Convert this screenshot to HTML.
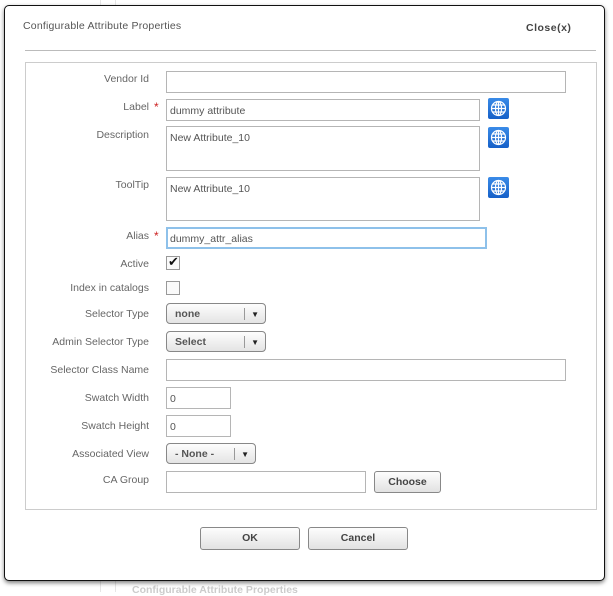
<!DOCTYPE html>
<html><head><style>
body{margin:0;width:613px;height:592px;background:#fff;position:relative;overflow:hidden;font-family:"Liberation Sans",sans-serif;font-size:10.5px;color:#555}
.a{position:absolute}
.dlg{left:4px;top:5px;width:599px;height:574px;border:1px solid #111;border-radius:5px;background:#fff;box-shadow:0 2px 4px rgba(0,0,0,.5)}
.lab{position:absolute;right:464px;text-align:right;white-space:nowrap;color:#666}
.in{position:absolute;border:1px solid #b5b5b5;background:#fff;box-sizing:border-box;padding:5px 3px 2px;white-space:nowrap;color:#555}
.star{position:absolute;color:#c22;font-size:12px;left:154px}
.glb{position:absolute;left:488px;width:21px;height:21px;background:linear-gradient(#3a8be8,#1560c8);border-radius:2px}
.sel{position:absolute;border:1px solid #888;border-radius:4px;background:linear-gradient(#fdfdfd,#e4e4e4);box-sizing:border-box;font-weight:bold;color:#555;padding:4px 8px;font-size:10.5px}
.sel .sep{position:absolute;right:20px;top:4px;height:12px;border-left:1px solid #999}
.sel .ar{position:absolute;right:6px;top:6px;font-size:8px;color:#222}
.btn{position:absolute;border:1px solid #888;border-radius:3px;background:linear-gradient(#fdfdfd,#e2e2e2);box-sizing:border-box;font-weight:bold;text-align:center;color:#444;line-height:21px}
.cb{position:absolute;left:166px;width:14px;height:14px;border:1px solid #999;box-sizing:border-box;background:#fafafa}
</style></head><body>
<div class="a" style="left:100px;top:0;width:1px;height:592px;background:#e6e6e6"></div>
<div class="a" style="left:115px;top:0;width:1px;height:592px;background:#e6e6e6"></div>
<div class="a" style="left:132px;top:584px;color:#ccc;font-weight:bold">Configurable Attribute Properties</div>
<div class="a dlg"></div>
<div class="a" style="left:23px;top:20px;letter-spacing:0.2px">Configurable Attribute Properties</div>
<div class="a" style="left:526px;top:22px;font-weight:bold;color:#444;letter-spacing:0.5px">Close(x)</div>
<div class="a" style="left:25px;top:50px;width:571px;height:1px;background:#bbb"></div>
<div class="a" style="left:25px;top:62px;width:570px;height:446px;border:1px solid #ccc"></div>

<div class="lab" style="top:73px">Vendor Id</div>
<div class="in" style="left:166px;top:71px;width:400px;height:22px"></div>
<div class="lab" style="top:101px;right:464px">Label</div><span class="star" style="top:100px">*</span>
<div class="in" style="left:166px;top:99px;width:314px;height:22px">dummy attribute</div>
<div class="lab" style="top:129px">Description</div>
<div class="in" style="left:166px;top:126px;width:314px;height:45px">New Attribute_10</div>
<div class="lab" style="top:179px">ToolTip</div>
<div class="in" style="left:166px;top:177px;width:314px;height:44px">New Attribute_10</div>
<div class="lab" style="top:230px">Alias</div><span class="star" style="top:229px">*</span>
<div class="in" style="left:166px;top:227px;width:321px;height:22px;border:2px solid #8ec1ea;padding:4px 2px 1px">dummy_attr_alias</div>
<div class="lab" style="top:258px">Active</div>
<div class="cb" style="top:256px"><span class="a" style="left:1px;top:-3px;font-size:13px;color:#111">✔</span></div>
<div class="lab" style="top:282px">Index in catalogs</div>
<div class="cb" style="top:281px"></div>
<div class="lab" style="top:308px">Selector Type</div>
<div class="sel" style="left:166px;top:303px;width:100px;height:21px">none<span class="sep"></span><span class="ar">▼</span></div>
<div class="lab" style="top:336px">Admin Selector Type</div>
<div class="sel" style="left:166px;top:331px;width:100px;height:21px">Select<span class="sep"></span><span class="ar">▼</span></div>
<div class="lab" style="top:364px">Selector Class Name</div>
<div class="in" style="left:166px;top:359px;width:400px;height:22px"></div>
<div class="lab" style="top:392px">Swatch Width</div>
<div class="in" style="left:166px;top:387px;width:65px;height:22px">0</div>
<div class="lab" style="top:420px">Swatch Height</div>
<div class="in" style="left:166px;top:415px;width:65px;height:22px">0</div>
<div class="lab" style="top:448px">Associated View</div>
<div class="sel" style="left:166px;top:443px;width:90px;height:21px">- None -<span class="sep"></span><span class="ar">▼</span></div>
<div class="lab" style="top:474px">CA Group</div>
<div class="in" style="left:166px;top:471px;width:200px;height:22px"></div>
<div class="btn" style="left:374px;top:471px;width:67px;height:22px">Choose</div>

<svg class="glb" style="top:98px" viewBox="0 0 21 21"><g fill="none" stroke="#fff" stroke-width="1.2"><circle cx="10.5" cy="10.5" r="7"/><ellipse cx="10.5" cy="10.5" rx="3" ry="7"/><path d="M3.5 10.5h14M10.5 3.5v14M4.5 7h12M4.5 14h12"/></g></svg>
<svg class="glb" style="top:127px" viewBox="0 0 21 21"><g fill="none" stroke="#fff" stroke-width="1.2"><circle cx="10.5" cy="10.5" r="7"/><ellipse cx="10.5" cy="10.5" rx="3" ry="7"/><path d="M3.5 10.5h14M10.5 3.5v14M4.5 7h12M4.5 14h12"/></g></svg>
<svg class="glb" style="top:177px" viewBox="0 0 21 21"><g fill="none" stroke="#fff" stroke-width="1.2"><circle cx="10.5" cy="10.5" r="7"/><ellipse cx="10.5" cy="10.5" rx="3" ry="7"/><path d="M3.5 10.5h14M10.5 3.5v14M4.5 7h12M4.5 14h12"/></g></svg>

<div class="btn" style="left:200px;top:527px;width:100px;height:23px">OK</div>
<div class="btn" style="left:308px;top:527px;width:100px;height:23px">Cancel</div>
</body></html>
